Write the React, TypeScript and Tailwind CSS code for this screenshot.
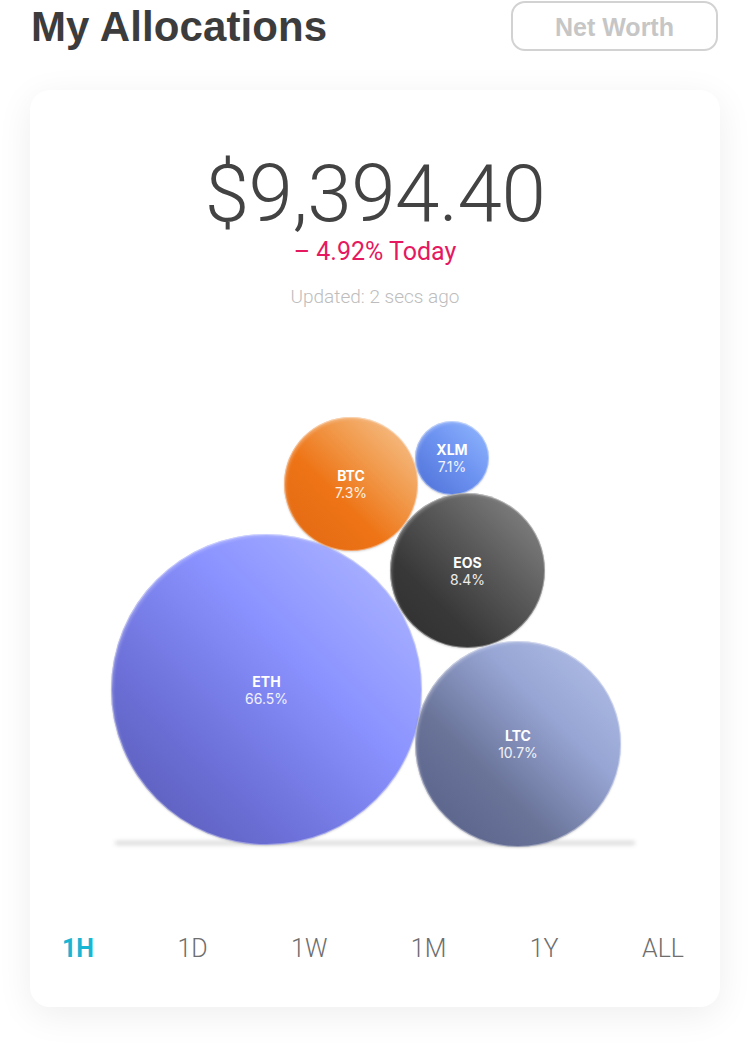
import React from "react";

type Bubble = {
  sym: string;
  pct: string;
  left: number;
  top: number;
  size: number;
  bg: string;
  z: string;
};

const bubbles: Bubble[] = [
  { sym: "ETH", pct: "66.5%", left: 81, top: 213, size: 311, bg: "bg-[linear-gradient(225deg,#b3bcff_0%,#8a92ff_40%,#6c70d8_70%,#5658ae_100%)]", z: "z-10" },
  { sym: "BTC", pct: "7.3%", left: 254, top: 96, size: 134, bg: "bg-[linear-gradient(225deg,#f7c898_0%,#f19a4c_35%,#ee7416_60%,#e06812_100%)]", z: "z-20" },
  { sym: "XLM", pct: "7.1%", left: 385, top: 100, size: 74, bg: "bg-[linear-gradient(225deg,#93b8ff_0%,#6f95f2_45%,#4b6ed6_100%)]", z: "z-20" },
  { sym: "EOS", pct: "8.4%", left: 360, top: 172, size: 155, bg: "bg-[linear-gradient(225deg,#8c8c8c_0%,#5a5a5a_40%,#383838_70%,#2e2e2e_100%)]", z: "z-20" },
  { sym: "LTC", pct: "10.7%", left: 385, top: 320, size: 206, bg: "bg-[linear-gradient(225deg,#b5c2ea_0%,#97a5d4_35%,#6a7499_65%,#555d85_100%)]", z: "z-20" },
];

export default function App() {
  return (
    <div className="w-[750px] h-[1054px] bg-white overflow-hidden font-['Liberation_Sans',sans-serif]">
      <div className="flex items-start justify-between pl-[31px] pr-[32px]">
        <h1 className="mt-[4px] text-[42px] leading-[46px] font-bold text-[#3c3c3c] tracking-[0.1px]">
          My Allocations
        </h1>
        <button className="mt-[1px] w-[207px] h-[50px] rounded-[14px] border-2 border-[#d2d2d2] text-[25px] leading-[30px] pt-[2px] font-bold text-[#c6c6c6] font-['Liberation_Sans',sans-serif]">
          Net Worth
        </button>
      </div>

      <div className="mt-[39px] mx-[30px] w-[690px] h-[917px] rounded-[20px] bg-white shadow-[0_8px_36px_rgba(0,0,0,0.07)] flex flex-col items-center pt-[64px]">
        <div className="text-[80px] leading-[80px] font-light text-[#434343] font-['Roboto',sans-serif] tracking-[-0.5px]">
          $9,394.40
        </div>
        <div className="mt-[4px] text-[25px] leading-[28px] text-[#e5195f] font-['Roboto',sans-serif]">
          – 4.92% Today
        </div>
        <div className="mt-[19px] text-[19px] leading-[24px] text-[#bdbdbd] font-['Roboto',sans-serif] font-light">
          Updated: 2 secs ago
        </div>

        <div className="relative w-[690px] h-[540px] mt-[12px]">
          <div className="absolute left-[85px] top-[520px] w-[520px] h-[4px] rounded-full bg-[#c8c8c8] blur-[2px] opacity-70" />
          {bubbles.map((b) => (
            <div
              key={b.sym}
              className={`absolute rounded-full flex flex-col items-center justify-center text-white shadow-[inset_0_0_0_1px_rgba(255,255,255,0.35),inset_2px_2px_3px_rgba(255,255,255,0.25),0_1px_2px_rgba(0,0,0,0.15)] ${b.bg} ${b.z}`}
              style={{ left: b.left, top: b.top, width: b.size, height: b.size }}
            >
              <div className="text-[14px] leading-[17px] font-bold font-['Inter',sans-serif]">{b.sym}</div>
              <div className="text-[14px] leading-[17px] font-['Inter',sans-serif] text-white/90">{b.pct}</div>
            </div>
          ))}
        </div>

        <div className="mt-[74px] w-full flex justify-between pl-[32px] pr-[36px] text-[25px] leading-[28px] text-[#6e6e6e] font-['Roboto',sans-serif] font-light">
          <span className="text-[#19b6d4] font-bold">1H</span>
          <span>1D</span>
          <span>1W</span>
          <span>1M</span>
          <span>1Y</span>
          <span>ALL</span>
        </div>
      </div>
    </div>
  );
}
